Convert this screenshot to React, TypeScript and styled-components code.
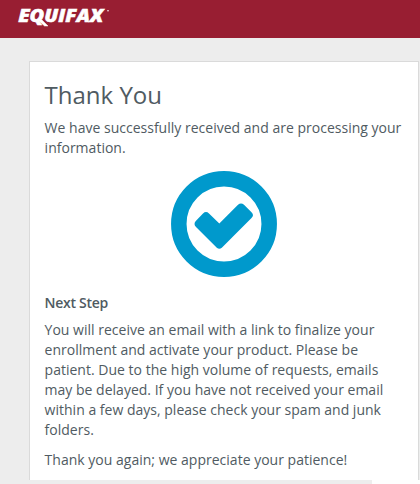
import React from "react";
import styled, { createGlobalStyle } from "styled-components";

const GlobalStyle = createGlobalStyle`
  * { box-sizing: border-box; }
  body {
    margin: 0;
    background: #ededed;
    font-family: "Open Sans", sans-serif;
    font-size: 14px;
    line-height: 20px;
    color: #505b62;
    overflow: hidden;
  }
`;

const Page = styled.div`
  width: 420px;
  height: 484px;
  display: flex;
  flex-direction: column;
`;

const Header = styled.header`
  flex: none;
  height: 38px;
  background: #981e32;
`;

const Logo = styled.svg`
  display: block;
  width: 130px;
  height: 38px;
  fill: #fff;
  stroke: #fff;
  stroke-width: 0.5px;
  font-family: "Open Sans", sans-serif;
  font-weight: 800;
  font-style: italic;
`;

const Card = styled.main`
  flex: none;
  width: 390px;
  height: 419px;
  margin: 23px 0 0 29px;
  padding: 16px 15px 0 14.6px;
  background: #fff;
  border: 1px solid #dadada;
  border-bottom: 0;
`;

const Title = styled.h1`
  margin: 0;
  font-size: 24px;
  line-height: 34px;
  font-weight: 400;
`;

const Paragraph = styled.p`
  margin: 0 0 10px;
  letter-spacing: 0.01px;
`;

const Intro = styled(Paragraph)`
  margin: 6px 0 12px;
`;

const CheckMark = styled.svg`
  display: block;
  width: 108px;
  height: 108px;
  margin: 0 auto;
`;

const Subtitle = styled.h2`
  margin: 15px 0 7px;
  font-size: 14px;
  line-height: 20px;
  font-weight: 600;
  letter-spacing: -0.3px;
`;

const Footer = styled.footer`
  flex: none;
  align-self: flex-end;
  width: 48px;
  height: 4px;
  background: #fefefe;
`;

export default function App() {
  return (
    <Page>
      <GlobalStyle />
      <Header>
        <Logo viewBox="0 0 130 38" aria-label="Equifax">
          <text x="18.3" y="21.6" fontSize="18.2" textLength="11.5" lengthAdjust="spacingAndGlyphs">E</text>
          <text x="29.6" y="21.6" fontSize="17.4" textLength="73.6" lengthAdjust="spacingAndGlyphs">QUIFAX</text>
          <path d="M38 20h4l6 6h-3.5z" />
          <circle cx="108" cy="10.8" r="0.8" stroke="none" />
        </Logo>
      </Header>
      <Card>
        <Title>Thank You</Title>
        <Intro>
          We have successfully received and are processing your
          <br />
          information.
        </Intro>
        <CheckMark viewBox="-54 -54 108 108" aria-hidden="true">
          <circle r="45.2" fill="none" stroke="#0099cc" strokeWidth="15.5" />
          <path
            fill="#0099cc"
            d="M-21-10.5Q-18-13.3-15-10.5L-4.7-.5 14-19.2Q17-22 20-19.2L27.5-11.7Q30.5-8.8 27.5-6L-2.2 23.7Q-4.7 26-7.2 23.7L-28 3Q-31 0-28-3.2Z"
          />
        </CheckMark>
        <Subtitle>Next Step</Subtitle>
        <Paragraph>
          You will receive an email with a link to finalize your
          <br />
          enrollment and activate your product. Please be
          <br />
          patient. Due to the high volume of requests, emails
          <br />
          may be delayed. If you have not received your email
          <br />
          within a few days, please check your spam and junk
          <br />
          folders.
        </Paragraph>
        <Paragraph>Thank you again; we appreciate your patience!</Paragraph>
      </Card>
      <Footer />
    </Page>
  );
}
